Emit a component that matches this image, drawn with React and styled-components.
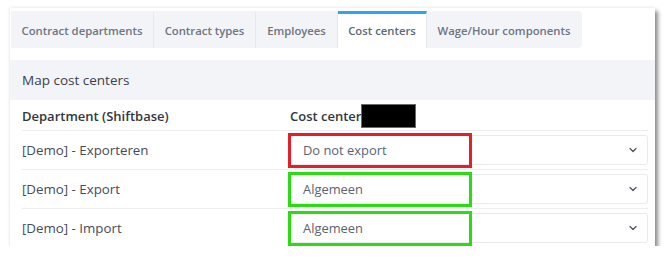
import React from 'react';
import styled, { createGlobalStyle } from 'styled-components';
import { ChevronDown } from 'lucide-react';

const GlobalStyle = createGlobalStyle`
  body {
    margin: 0;
    background: #ffffff;
    font-family: 'Open Sans', 'Liberation Sans', sans-serif;
  }
`;

const Page = styled.div`
  padding: 8px 15px 0 10px;
`;

const Card = styled.div`
  width: 645px;
  height: 238px;
  background: #ffffff;
  box-shadow: 3px 3px 4px rgba(0, 0, 0, 0.45), -1px -1px 3px rgba(0, 0, 0, 0.06);
  padding-top: 3px;
  box-sizing: border-box;
`;

const TabBar = styled.div`
  display: inline-flex;
  height: 37px;
  background: #f3f4f7;
  border-radius: 0 4px 4px 0;
  margin-left: 1px;
`;

const Tab = styled.div`
  display: flex;
  align-items: center;
  justify-content: center;
  width: ${p => p.$w}px;
  box-sizing: border-box;
  font-size: 11.3px;
  font-weight: 600;
  color: ${p => (p.$active ? '#5d6775' : '#6d7583')};
  background: ${p => (p.$active ? '#ffffff' : 'transparent')};
  border-top: 3px solid ${p => (p.$active ? '#2ea6ee' : 'transparent')};
  border-right: 1px solid ${p => (p.$last ? 'transparent' : '#e6e8ec')};
  padding-bottom: 1px;
`;

const SectionHeader = styled.div`
  margin-top: 12px;
  height: 40px;
  background: #f3f4f7;
  display: flex;
  align-items: center;
  padding-left: 12px;
  font-size: 13.5px;
  color: #39414d;
`;

const Table = styled.div`
  padding: 0 7px 0 12px;
`;

const Row = styled.div`
  display: grid;
  grid-template-columns: 268px 1fr;
  align-items: center;
  height: ${p => (p.$head ? 31 : 39)}px;
  box-sizing: border-box;
  border-bottom: 1px solid ${p => (p.$last ? 'transparent' : '#eceef2')};
`;

const HeadCell = styled.div`
  font-size: 13px;
  font-weight: 600;
  color: #2f3743;
  display: flex;
  align-items: center;
  padding-top: 1px;
`;

const Redacted = styled.span`
  display: inline-block;
  width: 55px;
  height: 24px;
  background: #000000;
  border: 1px solid #6a6a6a;
  box-sizing: border-box;
`;

const Label = styled.div`
  font-size: 13.3px;
  font-weight: 500;
  color: #434c59;
`;

const SelectWrap = styled.div`
  position: relative;
`;

const Select = styled.div`
  height: 30px;
  box-sizing: border-box;
  border: 1px solid #e8eaee;
  border-radius: 3px;
  display: flex;
  align-items: center;
  justify-content: space-between;
  padding: 0 8px 0 12px;
  font-size: 12.9px;
  color: #5b6371;
  svg {
    color: #4b5361;
  }
`;

const Highlight = styled.div`
  position: absolute;
  left: -2px;
  top: -2px;
  width: 184px;
  height: 35px;
  box-sizing: border-box;
  border: 3px solid ${p => p.$color};
  pointer-events: none;
`;

const tabs = [
  { name: 'Contract departments', w: 143 },
  { name: 'Contract types', w: 102 },
  { name: 'Employees', w: 82 },
  { name: 'Cost centers', w: 89, active: true },
  { name: 'Wage/Hour components', w: 155 },
];

const rows = [
  { dept: '[Demo] - Exporteren', value: 'Do not export', color: '#e61e25' },
  { dept: '[Demo] - Export', value: 'Algemeen', color: '#2add12' },
  { dept: '[Demo] - Import', value: 'Algemeen', color: '#2add12' },
];

export default function App() {
  return (
    <>
      <GlobalStyle />
      <Page>
        <Card>
          <TabBar>
            {tabs.map((t, i) => (
              <Tab key={t.name} $w={t.w} $active={t.active} $last={i === tabs.length - 1}>
                {t.name}
              </Tab>
            ))}
          </TabBar>
          <SectionHeader>Map cost centers</SectionHeader>
          <Table>
            <Row $head>
              <HeadCell>Department (Shiftbase)</HeadCell>
              <HeadCell>
                Cost center
                <Redacted />
              </HeadCell>
            </Row>
            {rows.map((r, i) => (
              <Row key={r.dept} $last={i === rows.length - 1}>
                <Label>{r.dept}</Label>
                <SelectWrap>
                  <Select>
                    <span>{r.value}</span>
                    <ChevronDown size={12} strokeWidth={2.5} />
                  </Select>
                  <Highlight $color={r.color} />
                </SelectWrap>
              </Row>
            ))}
          </Table>
        </Card>
      </Page>
    </>
  );
}
